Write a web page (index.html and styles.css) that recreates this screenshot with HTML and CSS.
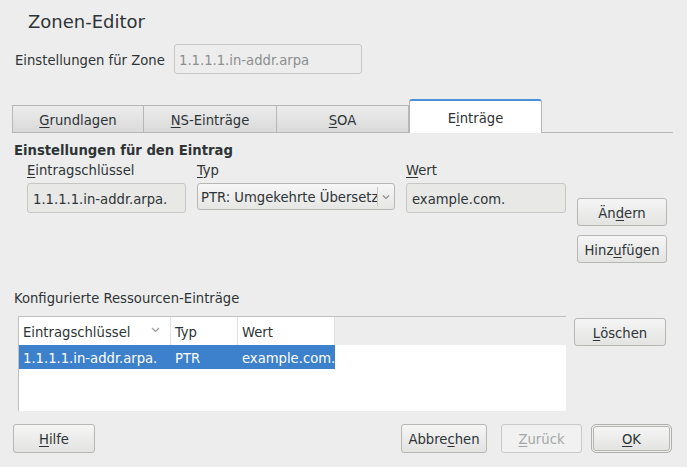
FILE: index.html
```html
<!DOCTYPE html>
<html lang="de">
<head>
<meta charset="utf-8">
<title>Zonen-Editor</title>
<link rel="stylesheet" href="styles.css">
</head>
<body>
<div class="dialog">
  <h1 class="title">Zonen-Editor</h1>

  <div class="zone-row">
    <span class="zone-label">Einstellungen für Zone</span>
    <div class="entry entry-zone">1.1.1.1.in-addr.arpa</div>
  </div>

  <div class="tabs">
    <div class="tab tab-first"><u>G</u>rundlagen</div>
    <div class="tab"><u>N</u>S-Einträge</div>
    <div class="tab tab-last"><u>S</u>OA</div>
    <div class="tab tab-active">E<u>i</u>nträge</div>
    <div class="tab-fill"></div>
  </div>

  <div class="section-heading">Einstellungen für den Eintrag</div>

  <div class="entry-grid">
    <div class="field-label"><u>E</u>intragschlüssel</div>
    <div class="field-label"><u>T</u>yp</div>
    <div class="field-label"><u>W</u>ert</div>
    <div class="side-buttons">
      <div class="button btn-side">Än<u>d</u>ern</div>
      <div class="button btn-side">Hinz<u>u</u>fügen</div>
    </div>
    <div class="entry field">1.1.1.1.in-addr.arpa.</div>
    <div class="combo">
      <span class="combo-text">PTR: Umgekehrte Übersetzung</span>
      <span class="combo-arrow">
        <svg width="8" height="6" viewBox="0 0 8 6"><polyline points="1,1.5 4,4.5 7,1.5" fill="none" stroke="#8b8e8f" stroke-width="1.2"/></svg>
      </span>
    </div>
    <div class="entry field">example.com.</div>
  </div>

  <div class="list-heading">Konfigurierte Ressourcen-Einträge</div>

  <div class="list-row">
    <div class="table">
      <div class="thead">
        <div class="th th-key">Eintragschlüssel
          <svg class="sort" width="9" height="6" viewBox="0 0 9 6"><polyline points="1,1 4.5,4.5 8,1" fill="none" stroke="#9a9c9c" stroke-width="1.2"/></svg>
        </div>
        <div class="th th-type">Typ</div>
        <div class="th th-val">Wert</div>
        <div class="th-fill"></div>
      </div>
      <div class="tr selected">
        <div class="td td-key">1.1.1.1.in-addr.arpa.</div>
        <div class="td td-type">PTR</div>
        <div class="td td-val">example.com.</div>
      </div>
    </div>
    <div class="button btn-delete"><u>L</u>öschen</div>
  </div>

  <div class="footer">
    <div class="button btn-help"><u>H</u>ilfe</div>
    <div class="footer-spacer"></div>
    <div class="button btn-cancel">Abbre<u>c</u>hen</div>
    <div class="button btn-back disabled"><u>Z</u>urück</div>
    <div class="button btn-ok"><u>O</u>K</div>
  </div>
</div>
</body>
</html>
```

FILE: styles.css
```css
html, body {
  margin: 0;
  padding: 0;
  background: #ededed;
}
body {
  font-family: "DejaVu Sans Condensed", "DejaVu Sans", sans-serif;
  font-stretch: condensed;
  font-size: 14.67px;
  color: #2e3436;
  width: 687px;
  height: 467px;
  overflow: hidden;
}
u {
  text-decoration: underline;
  text-underline-offset: 2px;
  text-decoration-thickness: 1px;
}
.dialog {
  display: flex;
  flex-direction: column;
}
.title {
  margin: 0;
  padding: 11px 0 0 28px;
  font-family: "DejaVu Sans", sans-serif;
  font-stretch: normal;
  font-weight: normal;
  font-size: 18px;
  line-height: 22px;
}

/* zone row */
.zone-row {
  display: flex;
  align-items: center;
  margin: 11px 0 0 15px;
  gap: 11px;
}
.zone-label {
  width: 148px;
  white-space: nowrap;
}
.entry {
  box-sizing: border-box;
  border: 1px solid #c8c6c2;
  border-radius: 3px;
  background: #e8e8e7;
  padding: 0 5px;
  display: flex;
  align-items: center;
  white-space: nowrap;
  overflow: hidden;
}
.entry-zone {
  width: 188px;
  height: 30px;
  background: #ededed;
  color: #8b8e8f;
  padding-left: 4px;
}

/* tabs */
.tabs {
  display: flex;
  align-items: flex-end;
  margin: 25px 14px 0 12px;
  height: 34px;
}
.tab {
  box-sizing: border-box;
  width: 133px;
  height: 28px;
  border: 1px solid #b6b6b3;
  border-right: none;
  background: linear-gradient(#ececec, #dadada);
  display: flex;
  align-items: center;
  justify-content: center;
  white-space: nowrap;
}
.tab-first { width: 131px; }
.tab-last { border-right: 1px solid #b6b6b3; }
.tab-active {
  height: 34px;
  border: 1px solid #b6b6b3;
  border-top: 2px solid #4a90d9;
  border-bottom: none;
  border-radius: 3px 3px 0 0;
  background: #ffffff;
}
.tab-fill {
  flex: 1;
  height: 1px;
  border-bottom: 1px solid #b6b6b3;
  align-self: flex-end;
  box-sizing: border-box;
}

/* entry settings */
.section-heading {
  font-weight: bold;
  padding-left: 14px;
  margin-top: 8px;
  line-height: 18px;
}
.entry-grid {
  display: grid;
  grid-template-columns: 159px 198px 160px 90px;
  grid-template-rows: 19px 30px auto;
  column-gap: 11px;
  row-gap: 4px;
  margin: 1px 0 0 27px;
}
.field-label {
  line-height: 19px;
  white-space: nowrap;
}
.field {
  height: 30px;
  padding-left: 5px;
}
.combo {
  box-sizing: border-box;
  height: 27px;
  border: 1px solid #b6b6b3;
  border-radius: 3px;
  background: linear-gradient(#f6f6f6, #e6e6e5);
  display: flex;
  align-items: center;
  overflow: hidden;
}
.combo-text {
  flex: 1;
  white-space: nowrap;
  overflow: hidden;
  padding-left: 3px;
}
.combo-arrow {
  width: 16px;
  height: 19px;
  border-left: 1px solid #c6c6c3;
  display: flex;
  align-items: center;
  justify-content: center;
  flex: none;
}
.side-buttons {
  grid-column: 4;
  grid-row: 1 / span 3;
  display: flex;
  flex-direction: column;
  gap: 9px;
  padding-top: 38px;
}
.button {
  box-sizing: border-box;
  flex-shrink: 0;
  height: 28px;
  border: 1px solid #b6b6b3;
  border-radius: 3px;
  background: linear-gradient(#f5f5f5, #e3e3e2);
  display: flex;
  align-items: center;
  justify-content: center;
  white-space: nowrap;
}
.btn-side { width: 90px; }

/* list */
.list-heading {
  padding-left: 14px;
  margin-top: 26px;
  line-height: 18px;
}
.list-row {
  display: flex;
  align-items: flex-start;
  gap: 8px;
  margin: 9px 0 0 18px;
}
.table {
  box-sizing: border-box;
  width: 548px;
  height: 95px;
  border: 1px solid #c0c0bd;
  border-right: none;
  border-bottom: none;
  background: #ffffff;
}
.thead {
  display: flex;
  height: 28px;
}
.th {
  box-sizing: border-box;
  display: flex;
  align-items: center;
  padding-left: 4px;
  border-right: 1px solid #e2e2e0;
  white-space: nowrap;
  background: #ffffff;
}
.th-key { width: 152px; position: relative; }
.th-type { width: 67px; }
.th-val { width: 97px; }
.th-fill {
  flex: 1;
  background: #ededed;
}
.sort {
  position: absolute;
  right: 10px;
  top: 10px;
}
.tr {
  display: flex;
  height: 24px;
  width: 316px;
}
.selected {
  background: #3d80cc;
  color: #ffffff;
}
.td {
  box-sizing: border-box;
  display: flex;
  align-items: center;
  padding-left: 4px;
  white-space: nowrap;
}
.td-key { width: 152px; }
.td-type { width: 67px; }
.td-val { width: 97px; }
.btn-delete {
  width: 92px;
  margin-top: 2px;
}

/* footer */
.footer {
  display: flex;
  align-items: center;
  margin: 13px 15px 0 13px;
  height: 29px;
}
.btn-help { width: 82px; height: 29px; }
.footer-spacer { flex: 1; }
.btn-cancel { width: 86px; height: 29px; }
.btn-back {
  width: 81px;
  height: 29px;
  margin-left: 14px;
}
.disabled {
  background: #f1f1f1;
  border-color: #c9c9c7;
  color: #a4a6a6;
}
.btn-ok {
  width: 77px;
  height: 25px;
  margin-left: 11px;
  margin-right: 2px;
  outline: 1px solid #b0b0ad;
  outline-offset: 1px;
}
```
